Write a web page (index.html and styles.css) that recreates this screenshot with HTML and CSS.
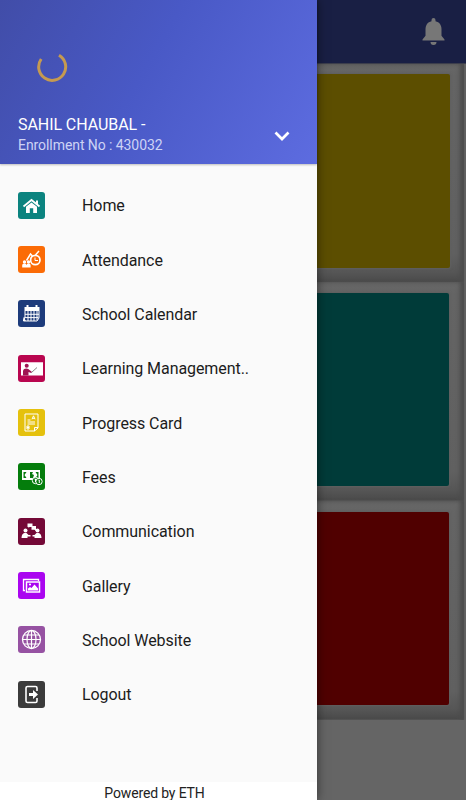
FILE: index.html
```
<!DOCTYPE html>
<html lang="en">
<head>
    <meta charset="UTF-8">
    <meta name="viewport" content="width=device-width, initial-scale=1.0">
    <title>School App</title>
    <link rel="stylesheet" href="styles.css">
</head>
<body>
    <div class="page">
        <header class="app-bar">
            <svg class="bell" viewBox="0 0 22 27">
                <path d="M9 3.200V2a2 2 0 0 1 4 0v1.200c4 .9 6 4 6 8v6.500l3 3.800v1H0v-1l3-3.800v-6.500c0-4 2-7.100 6-8zM8 24h6a3 3 0 0 1-6 0z"/>
            </svg>
        </header>
        <main class="cards">
            <div class="card"><div class="tile yellow"></div></div>
            <div class="card"><div class="tile teal"></div></div>
            <div class="card"><div class="tile red"></div></div>
        </main>
    </div>

    <!-- Side menu -->
    <aside class="drawer">
        <div class="drawer-header">
            <svg class="spinner" viewBox="0 0 32 32">
                <path d="M23 4.200A13.500 13.500 0 1 1 5.200 8"/>
            </svg>
            <div class="user">
                <div>
                    <div class="user-name">SAHIL CHAUBAL -</div>
                    <div class="user-number">Enrollment No : 430032</div>
                </div>
                <svg class="arrow" viewBox="0 0 16 10"><path d="M1.500 1.500L8 8l6.500-6.500"/></svg>
            </div>
        </div>

        <nav class="menu">
            <a class="menu-item">
                <svg class="icon home" viewBox="0 0 27 27">
                    <path class="line" d="M5.500 14.500l8-6.500 8 6.500" stroke-width="1.800"/>
                    <path class="fill" d="M18 8.500h2v4l-2-1.500zM8 14.800l5.500-4.400 5.500 4.400V21h-3.800v-4.800h-3.400V21H8z"/>
                </svg>
                <span>Home</span>
            </a>
            <a class="menu-item">
                <svg class="icon attendance" viewBox="0 0 27 27">
                    <path class="line" d="M8.500 14.500l4-6.500 2 2M17.500 9l3.500-4" stroke-width="1.500"/>
                    <circle class="line" cx="17.300" cy="14" r="4.700" stroke-width="1.700"/>
                    <path class="line" d="M17 11.500V14.500h3"/>
                    <circle class="fill" cx="6.500" cy="16" r="1.700"/>
                    <circle class="fill" cx="10.500" cy="16" r="1.700"/>
                    <path class="fill" d="M4.200 21.500v-2.500q0-1.500 2.200-1.500t2.200 1.500q0-1.500 2-1.500t2 1.500v2.500z"/>
                </svg>
                <span>Attendance</span>
            </a>
            <a class="menu-item">
                <svg class="icon calendar" viewBox="0 0 27 27">
                    <path class="fill" d="M6.500 7h15v4h-15zM8.500 5h2v3h-2zM17.500 5h2v3h-2z"/>
                    <path class="line" d="M7 11v6l-1.500 4H19l2-3v-7M7 14.300h14M6.500 17.600h14M10 11v10M13 11v10M16 11v10M19 11v9"/>
                    <path class="fill" d="M5.500 17l2.500 4h-3z"/>
                </svg>
                <span>School Calendar</span>
            </a>
            <a class="menu-item">
                <svg class="icon learning" viewBox="0 0 27 27">
                    <path class="fill" d="M3 7.300h22v13.200H3z"/>
                    <circle cx="8.700" cy="10.800" r="2" fill="#a01552"/>
                    <path d="M5 20.500v-4q0-3 3.500-3 2 0 3 1.500l2.500 2-.8 1-2.700-1v3.500z" fill="#a01552"/>
                    <path d="M13.500 17.500l5.500-5" fill="none" stroke="#777" stroke-width=".9"/>
                </svg>
                <span>Learning Management..</span>
            </a>
            <a class="menu-item">
                <svg class="icon progress" viewBox="0 0 27 27">
                    <path class="line" d="M7 5h13v14l-3.500 3H7zM16.500 22v-3.500H20M14 10.300l1.500-3.500 1.500 3.500M14.500 9.300h2M9.500 11h3M9.500 13h7.500M9.500 15h7.500M9 20v-3h2v3zM9 18.500h2"/>
                </svg>
                <span>Progress Card</span>
            </a>
            <a class="menu-item">
                <svg class="icon fees" viewBox="0 0 27 27">
                    <path class="fill" d="M4 7h18v10H4z"/>
                    <path d="M5.500 9h3l-2 3 2 3h-3zM20.500 9h-3l2 3-2 3h3zM12 9h3l-1 2 2 1-1 3h-3z" fill="#087a10"/>
                    <circle cx="17.500" cy="17.500" r="3.200" fill="#087a10" stroke="#fff"/>
                    <circle cx="21" cy="18.500" r="3.200" fill="#087a10" stroke="#fff"/>
                    <path class="line" d="M20.500 17h.8v3M16.500 16h1v3"/>
                </svg>
                <span>Fees</span>
            </a>
            <a class="menu-item">
                <svg class="icon communication" viewBox="0 0 27 27">
                    <path class="fill" d="M9.500 5.500h5v3.500h-3l-1 1v-1h-1zM13.500 8h4.500v5l-1.500-1.200h-3z"/>
                    <circle class="fill" cx="7.500" cy="12.500" r="2"/>
                    <circle class="fill" cx="19.500" cy="12.500" r="2"/>
                    <path class="fill" d="M3.500 20q.2-4.500 3-5h2l2 2h2v1.500h-3V20zM23.500 20q-.2-4.500-3-5h-2l-2 2h-2v1.500h2V20z"/>
                </svg>
                <span>Communication</span>
            </a>
            <a class="menu-item">
                <svg class="icon gallery" viewBox="0 0 27 27">
                    <path class="line" d="M7 18.500H5.500V7.500h15V9" stroke-width="1.300"/>
                    <path class="line" d="M8.500 10h13v10h-13z" stroke-width="1.500"/>
                    <path class="fill" d="M10 18.500v-2l2-1.500 1.500 1 3-3.500 3.500 4v2z"/>
                    <circle class="fill" cx="12" cy="12.500" r="1.100"/>
                </svg>
                <span>Gallery</span>
            </a>
            <a class="menu-item">
                <svg class="icon website" viewBox="0 0 27 27">
                    <circle class="line" cx="13.500" cy="13.500" r="9" stroke-width="1.300"/>
                    <ellipse class="line" cx="13.500" cy="13.500" rx="4.500" ry="9" stroke-width="1.200"/>
                    <path class="line" d="M13.500 4.500v18M4.500 13.500h18M6 9h15M6 18h15" stroke-width="1.200"/>
                </svg>
                <span>School Website</span>
            </a>
            <a class="menu-item">
                <svg class="icon logout" viewBox="0 0 27 27">
                    <path class="line" d="M19 10V7q0-1.500-1.500-1.500h-8Q8 5.500 8 7v13q0 1.500 1.500 1.500h8Q19 21.500 19 20v-3" stroke-width="1.600"/>
                    <path class="fill" d="M11 12h4V9l5 4.500-5 4.500v-3h-4z"/>
                </svg>
                <span>Logout</span>
            </a>
        </nav>

        <footer class="powered">Powered by ETH</footer>
    </aside>
</body>
</html>
```
FILE: styles.css
```
* {
    box-sizing: border-box;
}

body {
    margin: 0;
    height: 800px;
    font-family: Roboto, sans-serif;
    background: #656565;
    position: relative;
    overflow: hidden;
}

.app-bar {
    height: 64px;
    background: #191f44;
    border-bottom: 1px solid #3c3e4c;
    display: flex;
    justify-content: flex-end;
    align-items: center;
    padding: 0 21px 1px 0;
}

.bell {
    width: 23px;
    height: 27px;
    fill: #777;
}

.cards {
    display: flex;
    flex-direction: column;
}

.card {
    height: 219px;
    padding: 11px 17px 15px 17px;
    background: linear-gradient(to bottom, #676767 0, #646464 12px, #606060 190px, #565656 208px, #4a4a4a 218px, #656565 219px);
    box-shadow: inset -2px 0 1px #626262, inset -6px 0 4px #4c4c4c;
}

.card:first-child {
    height: 218px;
    padding: 10px 16px 14px 16px;
}

.tile {
    height: 100%;
    border-radius: 2px;
    box-shadow: 0 0 2px 1px #5f5f5f;
}

.yellow {
    background: #5c4e00;
}

.teal {
    background: #003b39;
}

.red {
    background: #500000;
}

/* Side menu */
.drawer {
    position: absolute;
    top: 0;
    left: 0;
    width: 317px;
    height: 800px;
    display: flex;
    flex-direction: column;
    background: #fafafa;
    box-shadow: 0 0 10px rgba(0, 0, 0, 0.5);
}

.drawer-header {
    height: 164px;
    padding: 51px 27px 0 18px;
    background: linear-gradient(120deg, #414da8 0%, #4959c6 45%, #5d6ce0 100%);
    box-shadow: 0 1px 2px rgba(0, 0, 0, 0.25);
}

.spinner {
    display: block;
    width: 32px;
    height: 32px;
    margin-left: 18px;
    fill: none;
    stroke: #c59a50;
    stroke-width: 3;
}

.user {
    display: flex;
    justify-content: space-between;
    align-items: center;
    margin-top: 31px;
}

.user-name {
    color: #fff;
    font-size: 16px;
    line-height: 21px;
    letter-spacing: -0.07px;
}

.user-number {
    color: #cdd3f5;
    font-size: 14px;
    line-height: 20px;
    letter-spacing: -0.07px;
}

.arrow {
    width: 16px;
    height: 10px;
    margin-top: 3px;
    fill: none;
    stroke: #fff;
    stroke-width: 2.7;
}

.menu {
    flex: 1;
    padding-top: 14px;
}

.menu-item {
    display: flex;
    align-items: center;
    height: 54.35px;
    padding-left: 18px;
    gap: 37px;
    font-size: 16px;
    letter-spacing: -0.07px;
    color: #1c1c1c;
}

.menu-item span {
    padding-top: 1px;
}

.icon {
    width: 27px;
    height: 27px;
    border-radius: 3px;
}

.fill {
    fill: #fff;
}

.line {
    fill: none;
    stroke: #fff;
}

.home {
    background: #0b837f;
}

.attendance {
    background: #fb6b06;
}

.calendar {
    background: #1d3b7b;
}

.learning {
    background: #b9064f;
}

.progress {
    background: #e5c10d;
}

.fees {
    background: #047d0c;
}

.communication {
    background: #740937;
}

.gallery {
    background: #aa05f0;
}

.website {
    background: #9652a2;
}

.logout {
    background: #3b3b3b;
}

.powered {
    height: 18px;
    padding-right: 8px;
    background: #fff;
    color: #222;
    font-size: 14px;
    line-height: 23px;
    letter-spacing: -0.15px;
    text-align: center;
}
```
